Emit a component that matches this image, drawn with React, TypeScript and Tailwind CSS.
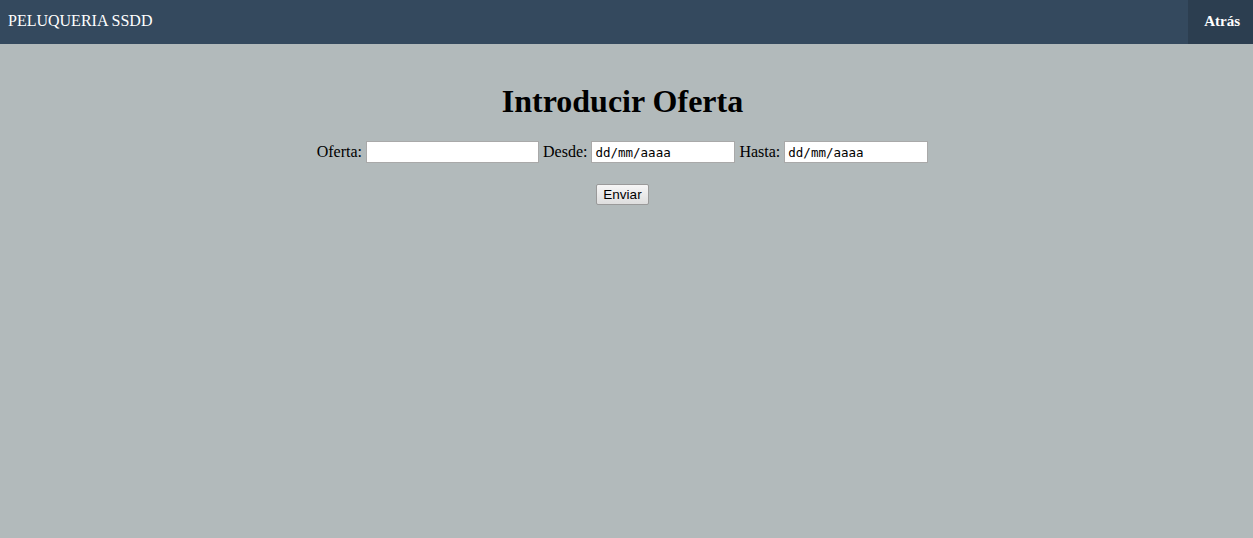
export default function App() {
  return (
    <div className="min-h-[538px] bg-[#b2babb] font-['Liberation_Serif',serif] text-black">
      <nav className="flex h-[44px] items-center justify-between bg-[#34495e] text-white">
        <span className="pb-[2px] pl-2 text-[16px]">PELUQUERIA SSDD</span>
        <a className="flex h-full items-center bg-[#2c3e50] pb-[2px] pl-4 pr-[13px] text-[15px] font-bold">Atrás</a>
      </nav>
      <main className="flex flex-col items-center pr-[8px] pt-[39px]">
        <h1 className="text-[32px] font-bold leading-[37px]">Introducir Oferta</h1>
        <form className="mt-[20px] flex flex-col items-center">
          <div className="flex items-center gap-[4px] text-[16px]">
            <label>Oferta:</label>
            <input
              type="text"
              className="h-[22px] w-[173px] border border-[#a9a9a9] bg-white px-1"
            />
            <label>Desde:</label>
            <input
              type="text"
              placeholder="dd/mm/aaaa"
              className="h-[22px] w-[144px] border border-[#a9a9a9] bg-white px-[3px] font-['DejaVu_Sans_Mono',monospace] text-[12.5px] placeholder:text-black"
            />
            <label>Hasta:</label>
            <input
              type="text"
              placeholder="dd/mm/aaaa"
              className="h-[22px] w-[144px] border border-[#a9a9a9] bg-white px-[3px] font-['DejaVu_Sans_Mono',monospace] text-[12.5px] placeholder:text-black"
            />
          </div>
          <button
            type="button"
            className="mt-[20px] h-[21px] w-[53px] rounded-[2px] border border-[#9a9a9a] bg-gradient-to-b from-[#f6f6f6] to-[#dedede] font-['Liberation_Sans',sans-serif] text-[13.5px] leading-none"
          >
            Enviar
          </button>
        </form>
      </main>
    </div>
  );
}
